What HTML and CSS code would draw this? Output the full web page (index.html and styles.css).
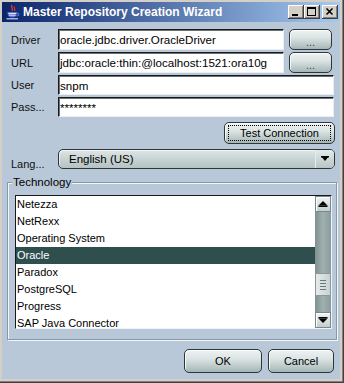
FILE: index.html
```html
<!DOCTYPE html>
<html lang="en">
<head>
  <meta charset="UTF-8">
  <title>Master Repository Creation Wizard</title>
  <link rel="stylesheet" href="styles.css">
</head>
<body>
  <div class="window">
    <div class="titlebar">
      <svg class="app-icon" width="16" height="16" viewBox="0 0 16 16">
        <path d="M7 1 C5 3 9 4 7 7" fill="none" stroke="#e03a20" stroke-width="1.4"/>
        <path d="M9.5 2.5 C8 4.5 11 5 9.5 7" fill="none" stroke="#e03a20" stroke-width="1.2"/>
        <path d="M2.5 8 H12 V9.5 C12 12 10 13.5 7.25 13.5 C4.5 13.5 2.5 12 2.5 9.5 Z" fill="#5a6fd0"/>
        <path d="M3.5 9.5 H11 M4 11.2 H10.5" stroke="#ffffff" stroke-width="0.8"/>
        <path d="M12 9 C14.5 9 14.5 12 11.5 12" fill="none" stroke="#5a6fd0" stroke-width="1.2"/>
        <path d="M1.5 14.8 H13" stroke="#c8d0f4" stroke-width="1.2"/>
      </svg>
      <span class="title">Master Repository Creation Wizard</span>
      <div class="caption-buttons">
        <span class="cap-btn">
          <svg width="16" height="14" viewBox="0 0 16 14"><rect x="4" y="9" width="6" height="2" fill="#000"/></svg>
        </span>
        <span class="cap-btn">
          <svg width="16" height="14" viewBox="0 0 16 14"><rect x="3.5" y="2.5" width="8" height="8" fill="none" stroke="#000"/><rect x="3" y="2" width="9" height="2" fill="#000"/></svg>
        </span>
        <span class="cap-btn close">
          <svg width="16" height="14" viewBox="0 0 16 14"><path d="M4.5 3.5 L10.5 9.5 M10.5 3.5 L4.5 9.5" stroke="#000" stroke-width="1.6"/></svg>
        </span>
      </div>
    </div>

    <div class="content">
      <div class="form">
        <label class="lbl">Driver</label>
        <div class="field">oracle.jdbc.driver.OracleDriver</div>
        <button class="btn browse">...</button>

        <label class="lbl">URL</label>
        <div class="field">jdbc:oracle:thin:@localhost:1521:ora10g</div>
        <button class="btn browse">...</button>

        <label class="lbl">User</label>
        <div class="field wide">snpm</div>

        <label class="lbl">Pass...</label>
        <div class="field wide">********</div>
      </div>

      <div class="test-row">
        <button class="btn test"><span class="focus">Test Connection</span></button>
      </div>

      <div class="lang-row">
        <label class="lbl">Lang...</label>
        <div class="combo">
          <span class="combo-text">English (US)</span>
          <span class="combo-arrow">
            <svg width="10" height="6" viewBox="0 0 10 6"><path d="M1 0 H9 L5 5 Z" fill="#000"/><rect x="1" y="0" width="8" height="1.5" fill="#000"/></svg>
          </span>
        </div>
      </div>

      <fieldset class="tech">
        <legend>Technology</legend>
        <div class="list">
          <ul class="items">
            <li>Netezza</li>
            <li>NetRexx</li>
            <li>Operating System</li>
            <li class="selected">Oracle</li>
            <li>Paradox</li>
            <li>PostgreSQL</li>
            <li>Progress</li>
            <li>SAP Java Connector</li>
          </ul>
          <div class="scrollbar">
            <div class="sb-btn">
              <svg width="10" height="6" viewBox="0 0 10 6"><path d="M5 0 L9.5 4.5 H0.5 Z" fill="#000"/><rect x="0.5" y="4.5" width="9" height="1.5" fill="#000"/></svg>
            </div>
            <div class="sb-track">
              <div class="sb-thumb">
                <span></span><span></span><span></span><span></span>
              </div>
            </div>
            <div class="sb-btn">
              <svg width="10" height="6" viewBox="0 0 10 6"><path d="M0.5 1.5 H9.5 L5 6 Z" fill="#000"/><rect x="0.5" y="0" width="9" height="1.5" fill="#000"/></svg>
            </div>
          </div>
        </div>
      </fieldset>

      <div class="footer">
        <button class="btn ok">OK</button>
        <button class="btn cancel">Cancel</button>
      </div>
    </div>
  </div>
</body>
</html>
```

FILE: styles.css
```css
* {
  box-sizing: border-box;
}

body {
  margin: 0;
  font-family: "Liberation Sans", Arial, sans-serif;
  font-size: 11px;
  color: #000;
}

.window {
  width: 344px;
  height: 383px;
  display: flex;
  flex-direction: column;
  padding: 2px 3px 3px 2px;
  background: #d4d0c8;
  border-right: 1px solid #404040;
  border-bottom: 1px solid #404040;
  box-shadow: inset -1px -1px 0 #808080;
}

/* title bar */

.titlebar {
  height: 20px;
  display: flex;
  align-items: center;
  padding: 0 2px 0 3px;
  background: linear-gradient(to right, #0a246a, #a6caf0);
}

.app-icon {
  flex: none;
}

.title {
  flex: 1;
  margin-left: 2px;
  color: #fff;
  font-weight: bold;
  font-size: 12px;
  white-space: nowrap;
}

.caption-buttons {
  display: flex;
}

.cap-btn {
  width: 16px;
  height: 14px;
  display: block;
  background: #d4d0c8;
  box-shadow: inset -1px -1px 0 #404040, inset 1px 1px 0 #fff, inset -2px -2px 0 #808080;
}

.cap-btn svg {
  display: block;
}

.cap-btn.close {
  margin-left: 2px;
}

/* dialog body */

.content {
  flex: 1;
  display: flex;
  flex-direction: column;
  padding: 7px 6px 6px 9px;
  background: #b9c8d8;
}

.form {
  display: grid;
  grid-template-columns: 47px 1fr 50px;
  grid-template-rows: 21px 21px 20px 20px;
  row-gap: 2px;
}

.lbl {
  display: flex;
  align-items: center;
  color: #101010;
}

.field {
  display: flex;
  align-items: center;
  padding: 0 2px 0 1px;
  font-size: 11.6px;
  background: #fff;
  border-top: 1px solid #1a1a1a;
  border-left: 1px solid #1a1a1a;
  border-right: 1px solid #e8eef4;
  border-bottom: 1px solid #e8eef4;
  box-shadow: inset 1px 1px 0 #6a7070;
  white-space: nowrap;
  overflow: hidden;
}

.field.wide {
  grid-column: span 2;
}

.btn {
  font: inherit;
  color: #000;
  padding: 0;
  border: 1px solid #2c3838;
  border-radius: 5px;
  background: linear-gradient(#eef2f2, #dce4e4 40%, #b4c2c2 85%, #a4b4b4);
  box-shadow: inset 1px 1px 0 rgba(255, 255, 255, 0.8);
}

.btn.browse {
  width: 43px;
  margin-left: 5px;
  padding-top: 4px;
  color: #404848;
}

.test-row {
  display: flex;
  justify-content: flex-end;
  margin-top: 5px;
  margin-right: -1px;
}

.btn.test {
  width: 111px;
  height: 22px;
  padding: 2px 3px;
}

.btn.test .focus {
  display: flex;
  align-items: center;
  justify-content: center;
  height: 100%;
  border: 1px dotted #000;
}

.lang-row {
  display: grid;
  grid-template-columns: 47px 1fr;
  height: 20px;
  margin-top: 5px;
  margin-right: -1px;
}

.lang-row .lbl {
  align-items: flex-end;
  margin-bottom: -1px;
}

.combo {
  display: flex;
  border: 1px solid #2c3838;
  border-radius: 5px;
  background: linear-gradient(#dfe6e6, #c8d3d3 50%, #b6c3c3);
  box-shadow: inset 1px 1px 0 rgba(255, 255, 255, 0.6);
  overflow: hidden;
}

.combo-text {
  flex: 1;
  display: flex;
  align-items: center;
  padding-left: 10px;
  font-size: 11.5px;
}

.combo-arrow {
  width: 19px;
  display: flex;
  align-items: center;
  justify-content: center;
  border-left: 1px solid #e4ecec;
  background: linear-gradient(#e4eaea, #b8c4c4);
}

/* technology group */

.tech {
  margin: 6px -3px 0 -4px;
  padding: 6px 4px 10px 7px;
  border: 1px solid #8797a6;
  box-shadow: inset 1px 1px 0 #f2f6fa, 1px 1px 0 #f2f6fa;
  min-width: 0;
}

.tech legend {
  margin-left: -3px;
  padding: 0 1px;
  line-height: 14px;
  font-size: 11.5px;
  background: #b9c8d8;
}

.list {
  display: flex;
  height: 134px;
  border-top: 1px solid #1a1a1a;
  border-left: 1px solid #1a1a1a;
  border-right: 1px solid #f0f4f8;
  border-bottom: 1px solid #f0f4f8;
  background: #fff;
  overflow: hidden;
}

.items {
  flex: 1;
  margin: 0;
  padding: 0;
  list-style: none;
}

.items li {
  height: 17px;
  line-height: 17px;
  padding-left: 1px;
  white-space: nowrap;
}

.items li.selected {
  background: #2f4f4f;
  color: #fff;
}

.scrollbar {
  width: 16px;
  display: flex;
  flex-direction: column;
  background: #8d9e9e;
}

.sb-btn {
  height: 16px;
  display: flex;
  align-items: center;
  justify-content: center;
  background: linear-gradient(#f2f4f4, #c4cece);
  border: 1px solid #7c8888;
  box-shadow: inset 1px 1px 0 #fff;
}

.sb-track {
  flex: 1;
  padding-top: 61px;
  background: linear-gradient(to right, #7e9090, #a0b0b0 50%, #8a9b9b);
}

.sb-thumb {
  height: 23px;
  display: flex;
  flex-direction: column;
  justify-content: center;
  gap: 2px;
  padding: 0 4px;
  background: linear-gradient(to right, #e6eaea, #c8d2d2);
  border: 1px solid #8c9a9a;
}

.sb-thumb span {
  height: 1px;
  background: #6c7878;
}

/* footer */

.footer {
  display: flex;
  justify-content: flex-end;
  gap: 6px;
  margin-top: 9px;
}

.footer .btn {
  height: 24px;
}

.btn.ok {
  width: 78px;
}

.btn.cancel {
  width: 66px;
}
```
